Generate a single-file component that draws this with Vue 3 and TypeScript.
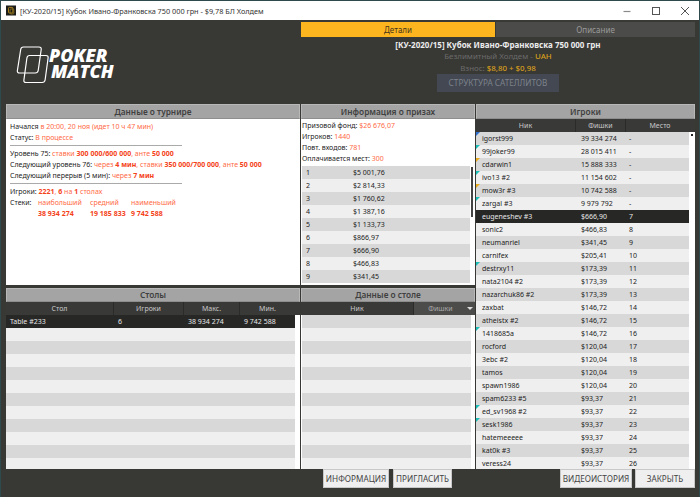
<script setup lang="ts">
interface Player { nick: string; chips: string; place: string; flag?: string }
const prizes: [string, string][] = [
  ['1', '$5 001,76'], ['2', '$2 814,33'], ['3', '$1 760,62'], ['4', '$1 387,16'], ['5', '$1 133,73'],
  ['6', '$866,97'], ['7', '$666,90'], ['8', '$466,83'], ['9', '$341,45'],
]
const players: Player[] = [
  { nick: 'igorst999', chips: '39 334 274', place: '-', flag: 'blue' },
  { nick: '99joker99', chips: '28 015 411', place: '-', flag: 'teal' },
  { nick: 'cdarwin1', chips: '15 888 333', place: '-', flag: 'gold' },
  { nick: 'ivo13 #2', chips: '11 154 602', place: '-', flag: 'teal' },
  { nick: 'mow3r #3', chips: '10 742 588', place: '-', flag: 'gold' },
  { nick: 'zargal #3', chips: '9 979 792', place: '-', flag: 'teal' },
  { nick: 'eugeneshev #3', chips: '$666,90', place: '7' },
  { nick: 'sonic2', chips: '$466,83', place: '8' },
  { nick: 'neumanriel', chips: '$341,45', place: '9' },
  { nick: 'carnifex', chips: '$205,41', place: '10' },
  { nick: 'destrxy11', chips: '$173,39', place: '11', flag: 'teal' },
  { nick: 'nata2104 #2', chips: '$173,39', place: '12' },
  { nick: 'nazarchuk86 #2', chips: '$173,39', place: '13' },
  { nick: 'zaxbat', chips: '$146,72', place: '14' },
  { nick: 'atheistx #2', chips: '$146,72', place: '15' },
  { nick: '1418685a', chips: '$146,72', place: '16', flag: 'teal' },
  { nick: 'rocford', chips: '$120,04', place: '17' },
  { nick: '3ebc #2', chips: '$120,04', place: '18' },
  { nick: 'tamos', chips: '$120,04', place: '19' },
  { nick: 'spawn1986', chips: '$120,04', place: '20' },
  { nick: 'spam6233 #5', chips: '$93,37', place: '21' },
  { nick: 'ed_sv1968 #2', chips: '$93,37', place: '22', flag: 'teal' },
  { nick: 'sesk1986', chips: '$93,37', place: '23', flag: 'teal' },
  { nick: 'hatemeeeee', chips: '$93,37', place: '24' },
  { nick: 'kat0k #3', chips: '$93,37', place: '25' },
  { nick: 'veress24', chips: '$93,37', place: '26' },
  { nick: '', chips: '', place: '' },
]
const emptyLeft = 11
const emptyMiddle = 12
</script>

<template>
  <div class="window">
    <header class="titlebar">
      <svg class="appicon" width="16" height="16" viewBox="0 0 16 16">
        <rect width="16" height="16" fill="#1c1c1a" />
        <rect x="4" y="3" width="7" height="9" rx="1.5" fill="none" stroke="#b8901f" stroke-width="1.4" />
        <rect x="6.5" y="5.5" width="6" height="8" rx="1.5" fill="none" stroke="#8f7420" stroke-width="1.4" />
      </svg>
      <span class="wintitle">[КУ-2020/15] Кубок Ивано-Франковска 750 000 грн - $9,78 БЛ Холдем</span>
      <div class="controls">
        <svg width="10" height="10" viewBox="0 0 10 10"><path d="M1.5 5.5h7" stroke="#8a8a8a" stroke-width="1.2" /></svg>
        <svg width="10" height="10" viewBox="0 0 10 10"><rect x="1.5" y="1.5" width="7" height="7" fill="none" stroke="#555" /></svg>
        <svg width="10" height="10" viewBox="0 0 10 10"><path d="M1 1l8 8M9 1L1 9" stroke="#555" /></svg>
      </div>
    </header>

    <section class="top">
      <div class="logo">
        <svg width="34" height="38" viewBox="0 0 34 38" fill="none" stroke="#fff" stroke-width="1.2">
          <path d="M7.5 1h15.5q2.5 0 2.2 2.5l-3 21q-.4 2.5-3 2.500H3.500q-2.500 0-2.100-2.500l3.300-21Q5 1 7.500 1z" />
          <path d="M13.500 9.500h16.500q2.500 0 2.100 2.500l-3 22q-.4 2.500-3 2.500H10q-2.500 0-2.100-2.500l3-22q.4-2.500 2.600-2.500z" />
        </svg>
        <div class="wordmark"><span>POKER</span><span class="match">MATCH</span></div>
      </div>
      <div class="details">
        <div class="tabs">
          <div class="tab active">Детали</div>
          <div class="tab">Описание</div>
        </div>
        <div class="tname">[КУ-2020/15] Кубок Ивано-Франковска 750 000 грн</div>
        <div class="tsub">Безлимитный Холдем - <b>UAH</b></div>
        <div class="tsub">Взнос: <b>$8,80 + $0,98</b></div>
        <div class="satellites">СТРУКТУРА САТЕЛЛИТОВ</div>
      </div>
    </section>

    <main class="panels">
      <section class="panel tour">
        <h2>Данные о турнире</h2>
        <div class="info">
          <p>Начался <em>в 20:00, 20 ноя (идет 10 ч 47 мин)</em></p>
          <p>Статус: <em>В процессе</em></p>
          <hr />
          <p>Уровень 75: <em>ставки <b>300 000/600 000</b>, анте <b>50 000</b></em></p>
          <p>Следующий уровень 76: <em>через <b>4 мин</b>, ставки <b>350 000/700 000</b>, анте <b>50 000</b></em></p>
          <p>Следующий перерыв (5 мин): <em>через <b>7 мин</b></em></p>
          <hr />
          <p>Игроки: <em><b>2221</b>, <b>6</b> на <b>1</b> столах</em></p>
          <div class="stacks">
            <span>Стеки:</span><em>наибольший</em><em>средний</em><em>наименьший</em>
            <span></span><b>38 934 274</b><b>19 185 833</b><b>9 742 588</b>
          </div>
        </div>
      </section>

      <section class="panel prizes">
        <h2>Информация о призах</h2>
        <div class="pinfo">
          <p>Призовой фонд: <em>$26 676,07</em></p>
          <p>Игроков: <em>1440</em></p>
          <p>Повт. входов: <em>781</em></p>
          <p>Оплачивается мест: <em>300</em></p>
          <div class="plist">
            <div class="prow" v-for="p in prizes" :key="p[0]"><span>{{ p[0] }}</span><span>{{ p[1] }}</span></div>
            <i class="pscroll"></i>
          </div>
        </div>
      </section>

      <section class="panel players">
        <h2>Игроки</h2>
        <div class="thead pgrid"><span>Ник</span><span>Фишки</span><span>Место</span></div>
        <div class="plbody">
          <div class="dot"></div>
          <div v-for="(p, i) in players" :key="i" class="lrow pgrid" :class="{ sel: p.nick === 'eugeneshev #3' }">
            <i v-if="p.flag" class="flag" :class="p.flag"></i>
            <span>{{ p.nick }}</span><span>{{ p.chips }}</span><span>{{ p.place }}</span>
          </div>
        </div>
      </section>

      <section class="panel tables low">
        <h2>Столы</h2>
        <div class="thead tgrid"><span>Стол</span><span>Игроки</span><span>Макс.</span><span>Мин.</span></div>
        <div class="tbody">
          <div class="trow tgrid sel"><span>Table #233</span><span>6</span><span>38 934 274</span><span>9 742 588</span></div>
          <div v-for="n in emptyLeft" :key="n" class="trow"></div>
        </div>
      </section>

      <section class="panel table low">
        <h2>Данные о столе</h2>
        <div class="thead sgrid"><span>Ник</span><span class="sorted">Фишки<i class="arrow"></i></span></div>
        <div class="tbody">
          <div v-for="n in emptyMiddle" :key="n" class="trow mid"></div>
        </div>
      </section>
    </main>

    <footer class="actions">
      <div class="group mid-group">
        <button class="w66">ИНФОРМАЦИЯ</button>
        <button class="w59">ПРИГЛАСИТЬ</button>
      </div>
      <div class="group">
        <button class="w72">ВИДЕОИСТОРИЯ</button>
        <button class="w60">ЗАКРЫТЬ</button>
      </div>
    </footer>
  </div>
</template>

<style>
html, body { margin: 0; background: #383835; }
</style>

<style scoped>
.window {
  width: 700px; height: 497px; box-sizing: border-box; overflow: hidden;
  display: flex; flex-direction: column;
  background: #383835; border: 1px solid #2f4a4c; border-bottom: 0;
  font-family: "Noto Sans", "Open Sans", sans-serif; font-size: 7px; font-weight: 400; color: #1c1c1c;
}
.titlebar {
  height: 19px; flex: none; background: #fff; display: flex; align-items: center;
  padding-left: 5px; color: #333; font-family: "Noto Sans", sans-serif;
}
.appicon { width: 10px; height: 11px; flex: none; margin-right: 4px; }
.wintitle { font-size: 7.300px; white-space: nowrap; }
.controls { margin-left: auto; display: flex; gap: 19px; padding-right: 9px; }
.top { height: 84px; flex: none; display: flex; }
.logo { width: 300px; box-sizing: border-box; display: flex; padding: 26px 0 0 15px; gap: 0; flex: none; }
.wordmark {
  display: flex; flex-direction: column; color: #fff; font-family: "Open Sans", sans-serif;
  font-style: italic; font-weight: 800; font-size: 18px; line-height: 16px; padding-top: 1px; margin-left: -1px;
}
.wordmark .match { margin-left: 2px; }
.details { flex: 1; display: flex; flex-direction: column; align-items: center; padding: 2px 4px 0 0; }
.tabs { display: flex; width: 100%; gap: 1px; height: 15px; margin-bottom: 2px; }
.tab { flex: 1; background: #4b4b49; color: #9a9a9a; text-align: center; line-height: 15px; font-size: 8px; }
.tab.active { background: #fdb51f; color: #45361a; flex: 0 0 194px; }
.tname { color: #ececec; font-weight: 700; font-size: 8px; line-height: 12px; }
.tsub { color: #6b6b6a; font-size: 7.900px; line-height: 11.500px; }
.tsub b { color: #d79e1c; font-weight: 500; }
.satellites {
  width: 122px; height: 18px; line-height: 18px; background: #434852; color: #7d828b;
  text-align: center; font-size: 8.200px;
}
.panels {
  flex: 1; min-height: 0; margin: 0 4px 0 5px; display: grid;
  grid-template-columns: 295px 175px 219px; grid-template-rows: 181px 181px;
  grid-template-areas: "tour prizes players" "tables table players";
  gap: 3px 0;
}
.tour { grid-area: tour; } .prizes { grid-area: prizes; } .players { grid-area: players; }
.tables { grid-area: tables; } .table { grid-area: table; }
.panel { display: flex; flex-direction: column; background: #fff; overflow: hidden; min-width: 0; border-right: 1px solid #383835; box-sizing: border-box; }
.players { border-right: 0; }
h2 {
  margin: 0; height: 15px; flex: none; box-sizing: border-box; background: #a4a4a4;
  border: 1px solid #b8b8b8; border-bottom-color: #8e8e8e; color: #404040;
  font-size: 8.300px; font-weight: 600; line-height: 13px; text-align: center;
}
.low h2 { height: 14px; line-height: 12px; }
p { margin: 0; white-space: nowrap; }
em { font-style: normal; color: #ff6a45; }
em b, .stacks b { color: #f4431a; font-weight: 700; }
.info { padding: 2px 4px; line-height: 11px; }
.info hr { border: 0; height: 1px; background: #aaa; width: 172px; margin: 2px 0; }
.stacks { display: grid; grid-template-columns: 28px 52px 41px auto; }
.pinfo { padding: 1px 0 0 1px; line-height: 11px; flex: 1; min-height: 0; display: flex; flex-direction: column; }
.plist { position: relative; margin-top: 2px; }
.prow { width: 168px; height: 13px; padding-left: 4px; box-sizing: border-box; display: grid; grid-template-columns: 47px auto; background: #d8d8d8; line-height: 13px; }
.prow:nth-child(even) { background: #efefef; }
.pscroll { position: absolute; left: 169px; top: 1px; width: 2px; height: 50px; background: #444; }
.thead { height: 13px; flex: none; background: #393938; color: #c8c8c8; line-height: 13px; text-align: center; }
.thead span { border-right: 1px solid #2b2b2a; }
.thead span:last-child { border-right: 0; }
.pgrid { display: grid; grid-template-columns: 100px 50px 68px; }
.tgrid { display: grid; grid-template-columns: 108px 70px 56px 55px; }
.sgrid { display: grid; grid-template-columns: 113px 61px; }
.sorted { background: #4c4c4a; position: relative; padding-right: 8px; color: #aaa; }
.arrow { position: absolute; right: 2px; top: 5px; border: 3px solid transparent; border-top: 3px solid #ddd; border-bottom: 0; }
.plbody { position: relative; flex: 1; min-height: 0; overflow: hidden; }
.dot { position: absolute; right: 2px; top: 2px; width: 2px; height: 2px; background: #222; }
.lrow { position: relative; width: 213px; height: 13px; line-height: 13px; background: #d8d8d8; }
.lrow:nth-child(odd) { background: #efefef; }
.lrow span { padding-left: 6px; white-space: nowrap; }
.lrow span:nth-of-type(2) { padding-left: 5px; }
.lrow span:nth-of-type(3) { padding-left: 3px; }
.lrow.sel, .trow.sel { background: #272726; color: #e8e8e8; }
.flag { position: absolute; left: 0; top: 0; width: 0; height: 0; border-top: 4px solid; border-right: 4px solid transparent; }
.flag.blue { border-top-color: #2e6fd0; } .flag.teal { border-top-color: #1cc0b8; } .flag.gold { border-top-color: #e8ac1e; }
.tbody { flex: 1; min-height: 0; overflow: hidden; }
.trow { width: 289px; height: 13px; line-height: 13px; background: #d8d8d8; }
.trow:nth-child(even) { background: #efefef; }
.trow.mid { width: 169px; margin-left: 1px; }
.trow.sel span { padding-left: 4px; }
.actions { height: 28px; flex: none; display: flex; justify-content: space-between; padding: 5px 4px 0 322px; }
.group { display: flex; gap: 4px; }
.group:last-child { gap: 3px; }
button {
  height: 19px; padding: 0; box-sizing: border-box; border: 1px solid #c8c8c8; background: #efefef; color: #444;
  font-family: "Noto Sans", sans-serif; font-size: 8.200px; border-radius: 0;
}
.w66 { width: 66px; } .w59 { width: 59px; } .w72 { width: 72px; } .w60 { width: 60px; }
</style>
